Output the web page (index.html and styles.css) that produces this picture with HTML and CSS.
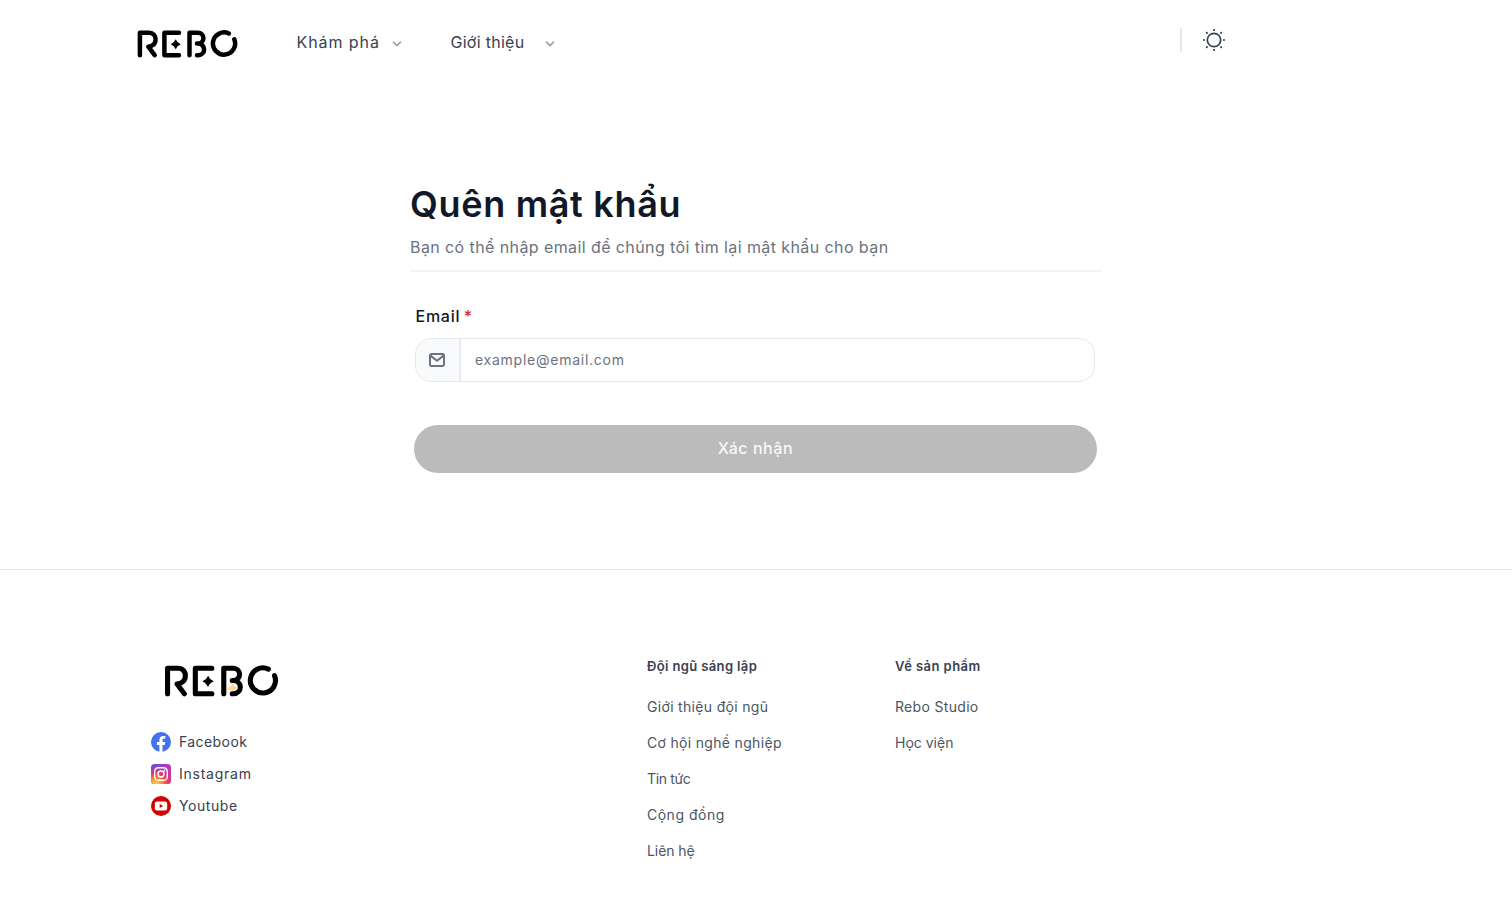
FILE: index.html
```html
<!DOCTYPE html>
<html lang="vi">
<head>
<meta charset="utf-8">
<title>Quên mật khẩu</title>
<link rel="stylesheet" href="styles.css">
</head>
<body>
<svg class="defs" width="0" height="0">
  <symbol id="logo" viewBox="137 29 101 30">
    <g fill="none" stroke="#000" stroke-width="4.5" stroke-linecap="round" stroke-linejoin="round">
      <path d="M139.9 55.2V32.7H149.3a6.3 6.3 0 0 1 6.3 6.8c0 4-2.9 6.6-7.3 7.2l6.4 8.5"/>
      <path d="M179 32.7H164.4V55.2H179"/>
      <path d="M189.500 55.2V32.7H198a5.4 5.4 0 0 1 0 10.9h-1M197 43.6h1.3a5.8 5.8 0 0 1 0 11.6H197"/>
      <path d="M228.8 33.5A11.1 11.1 0 1 0 234.3 39.3"/>
    </g>
    <path d="M175.7 39.3q1.400 3.600 5 5q-3.600 1.400-5 5q-1.400-3.600-5-5q3.600-1.400 5-5z"/>
  </symbol>
</svg>
<header class="nav">
  <svg class="nav-logo"><use href="#logo"/></svg>
  <a class="nav-link explore"><span class="t t-explore">Khám phá</span><svg class="chev" viewBox="0 0 10 6"><path d="M1.5 1.2 5 4.6 8.5 1.2"/></svg></a>
  <a class="nav-link about"><span class="t t-about">Giới thiệu</span><svg class="chev" viewBox="0 0 10 6"><path d="M1.5 1.2 5 4.6 8.5 1.2"/></svg></a>
  <div class="nav-end">
    <i class="divider"></i>
    <svg class="sun" viewBox="0 0 24 24"><circle cx="12" cy="12" r="6.7"/><path d="M12 1v2M12 21v2M1 12h2M21 12h2M4.200 4.200l1.400 1.400M18.400 18.400l1.400 1.400M4.200 19.800l1.400-1.400M18.400 5.600l1.400-1.400"/></svg>
  </div>
</header>
<main class="panel">
  <h1><span class="t t-title">Quên mật khẩu</span></h1>
  <p class="lead"><span class="t t-lead">Bạn có thể nhập email để chúng tôi tìm lại mật khẩu cho bạn</span></p>
  <label class="label"><span class="t t-label">Email</span><b class="star">*</b></label>
  <div class="field">
    <span class="prefix"><svg class="mail" viewBox="0 0 16 14"><rect x="1" y="1" width="14" height="12" rx="1.4"/><path d="M1.5 2.6 8 7.8l6.5-5.2"/></svg></span>
    <span class="placeholder"><span class="t t-ph">example@email.com</span></span>
  </div>
  <button class="submit"><span class="t t-submit">Xác nhận</span></button>
</main>
<footer class="footer">
  <section class="brand">
    <div class="foot-brand"><svg class="foot-logo"><use href="#logo"/></svg><i class="spark"></i></div>
    <a class="social"><svg viewBox="0 0 20 20"><circle cx="10" cy="10" r="10" fill="#4472ed"/><path fill="#fff" d="M8.4 19.9v-7H5.9V10h2.5V7.8c0-2.500 1.500-3.900 3.800-3.900 1.100 0 2.200.2 2.200.2v2.500h-1.300c-1.200 0-1.600.8-1.600 1.600V10h2.800l-.5 2.900h-2.300v7a10 10 0 0 1-3.100 0z"/></svg><span class="t t-fb">Facebook</span></a>
    <a class="social"><svg viewBox="0 0 20 20"><defs><linearGradient id="ig1" x1="0" y1="0" x2="1" y2="0.3"><stop stop-color="#5b4fe0"/><stop offset="1" stop-color="#c832b0"/></linearGradient><radialGradient id="ig2" cx=".25" cy="1.05" r="1"><stop stop-color="#ffd44f"/><stop offset=".25" stop-color="#ffa338"/><stop offset=".55" stop-color="#f2444f"/><stop offset="1" stop-color="#d32fa0" stop-opacity="0"/></radialGradient></defs><rect width="20" height="20" rx="3.5" fill="url(#ig1)"/><rect width="20" height="20" rx="3.5" fill="url(#ig2)"/><g fill="none" stroke="#fff" stroke-width="1.4"><rect x="3.7" y="3.7" width="12.6" height="12.6" rx="3.6"/><circle cx="10" cy="10" r="3"/></g><circle cx="13.5" cy="6.5" r=".9" fill="#fff"/></svg><span class="t t-ig">Instagram</span></a>
    <a class="social"><svg viewBox="0 0 20 20"><circle cx="10" cy="10" r="10" fill="#d20000"/><rect x="3.8" y="5.5" width="12.4" height="9" rx="2.2" fill="#fff"/><path d="M8.7 7.9v4.200l3.500-2.100z" fill="#d20000"/></svg><span class="t t-yt">Youtube</span></a>
  </section>
  <nav class="links">
    <h2><span class="t t-h1">Đội ngũ sáng lập</span></h2>
    <a><span class="t t-l1">Giới thiệu đội ngũ</span></a>
    <a><span class="t t-l1">Cơ hội nghề nghiệp</span></a>
    <a><span class="t t-l3">Tin tức</span></a>
    <a><span class="t t-l4">Cộng đồng</span></a>
    <a><span class="t t-l5">Liên hệ</span></a>
  </nav>
  <nav class="links">
    <h2><span class="t t-h2">Về sản phẩm</span></h2>
    <a><span class="t t-l1">Rebo Studio</span></a>
    <a><span class="t">Học viện</span></a>
  </nav>
</footer>
</body>
</html>
```
FILE: styles.css
```css
* { box-sizing: border-box; }
body { margin: 0; background: #fff; color: #374151; font-family: Inter, "Noto Sans", sans-serif; height: 911px; overflow: hidden; }
.defs { position: absolute; }
.t { display: inline-block; white-space: nowrap; }
.t-explore { letter-spacing: 0.92px; }
.t-about { letter-spacing: 0.28px; }
.t-title { letter-spacing: 0.68px; }
.t-lead { letter-spacing: 0.41px; }
.t-label { letter-spacing: 0.75px; }
.t-ph { letter-spacing: 0.75px; }
.t-submit { letter-spacing: 0.55px; }
.t-fb { letter-spacing: 0.42px; }
.t-ig { letter-spacing: 0.76px; }
.t-yt { letter-spacing: 0.56px; }
.t-h1 { letter-spacing: 0.37px; }
.t-h2 { letter-spacing: 0.44px; }
.t-l1 { letter-spacing: 0.32px; }
.t-l3 { letter-spacing: -0.34px; }
.t-l4 { letter-spacing: 0.5px; }
.t-l5 { letter-spacing: -0.09px; }
.nav { height: 86px; padding-left: 137px; display: flex; align-items: flex-start; }
.nav-logo { width: 101px; height: 30px; margin-top: 29px; }
.nav-link { display: flex; align-items: center; height: 24px; margin-top: 30px; font-size: 16px; }
.explore { margin-left: 58.5px; width: 154px; gap: 12px; }
.about { gap: 21px; }
.chev { width: 10px; height: 6px; margin-top: 4px; fill: none; stroke: #9ca3af; stroke-width: 1.7; stroke-linecap: round; stroke-linejoin: round; }
.nav-end { margin-left: auto; padding: 28px 286.500px 0 0; display: flex; gap: 20px; }
.divider { width: 1.500px; height: 24px; background: #e5e7eb; }
.sun { width: 24px; height: 24px; fill: none; stroke: #374151; stroke-width: 1.7; }
.panel { width: 692px; margin: 0 0 0 410px; padding-top: 94px; height: 483px; }
h1 { margin: 0; font-size: 36px; line-height: 48px; font-weight: 600; color: #111827; }
.lead { margin: 0; padding-top: 7px; height: 44px; font-size: 16px; line-height: 24px; color: #6b7280; border-bottom: 2px solid #f3f4f6; }
.label { display: block; margin: 32px 0 0 5.5px; font-size: 16px; line-height: 24px; font-weight: 500; color: #111827; }
.star { margin-left: 3.500px; color: #e02424; font-weight: 500; }
.field { margin: 10px 7px 0 5px; height: 44px; border: 1px solid #e5e7eb; border-radius: 16px; display: flex; overflow: hidden; }
.prefix { width: 45px; background: #f9fafb; border-right: 2px solid #e9ebef; display: flex; align-items: center; justify-content: center; }
.mail { width: 16px; height: 14px; margin-right: 1px; fill: none; stroke: #6b7280; stroke-width: 2; stroke-linejoin: round; }
.placeholder { padding-left: 14px; font-size: 14px; line-height: 42px; color: #6b7280; }
.submit { display: block; margin: 43px 0 0 4px; width: 683px; height: 48px; padding: 0 0 2px; border: 0; border-radius: 24px; background: #bbb; color: #f8f8f8; font: 500 16px/46px Inter, sans-serif; }
.footer { border-top: 1px solid #e5e7eb; height: 342px; padding-left: 151px; display: flex; }
.brand { width: 496px; padding-top: 94px; }
.foot-brand { position: relative; height: 62px; padding-left: 12.500px; }
.foot-logo { display: block; width: 115px; height: 34px; }
.spark { position: absolute; left: 75px; top: 19px; width: 12px; height: 8px; background: #ffd68f; clip-path: polygon(55% 0, 70% 35%, 100% 65%, 55% 100%, 0 70%, 40% 45%); }
.social { display: flex; align-items: center; gap: 8px; height: 32px; font-size: 14px; }
.social .t { padding-bottom: 2px; }
.social svg { width: 20px; height: 20px; }
.links { width: 248px; padding-top: 86px; font-size: 14px; color: #4b5563; }
.links h2 { margin: 0 0 21px; font-size: 13px; line-height: 20px; font-weight: 600; color: #374151; }
.links a { display: block; height: 36px; line-height: 20px; }
```
